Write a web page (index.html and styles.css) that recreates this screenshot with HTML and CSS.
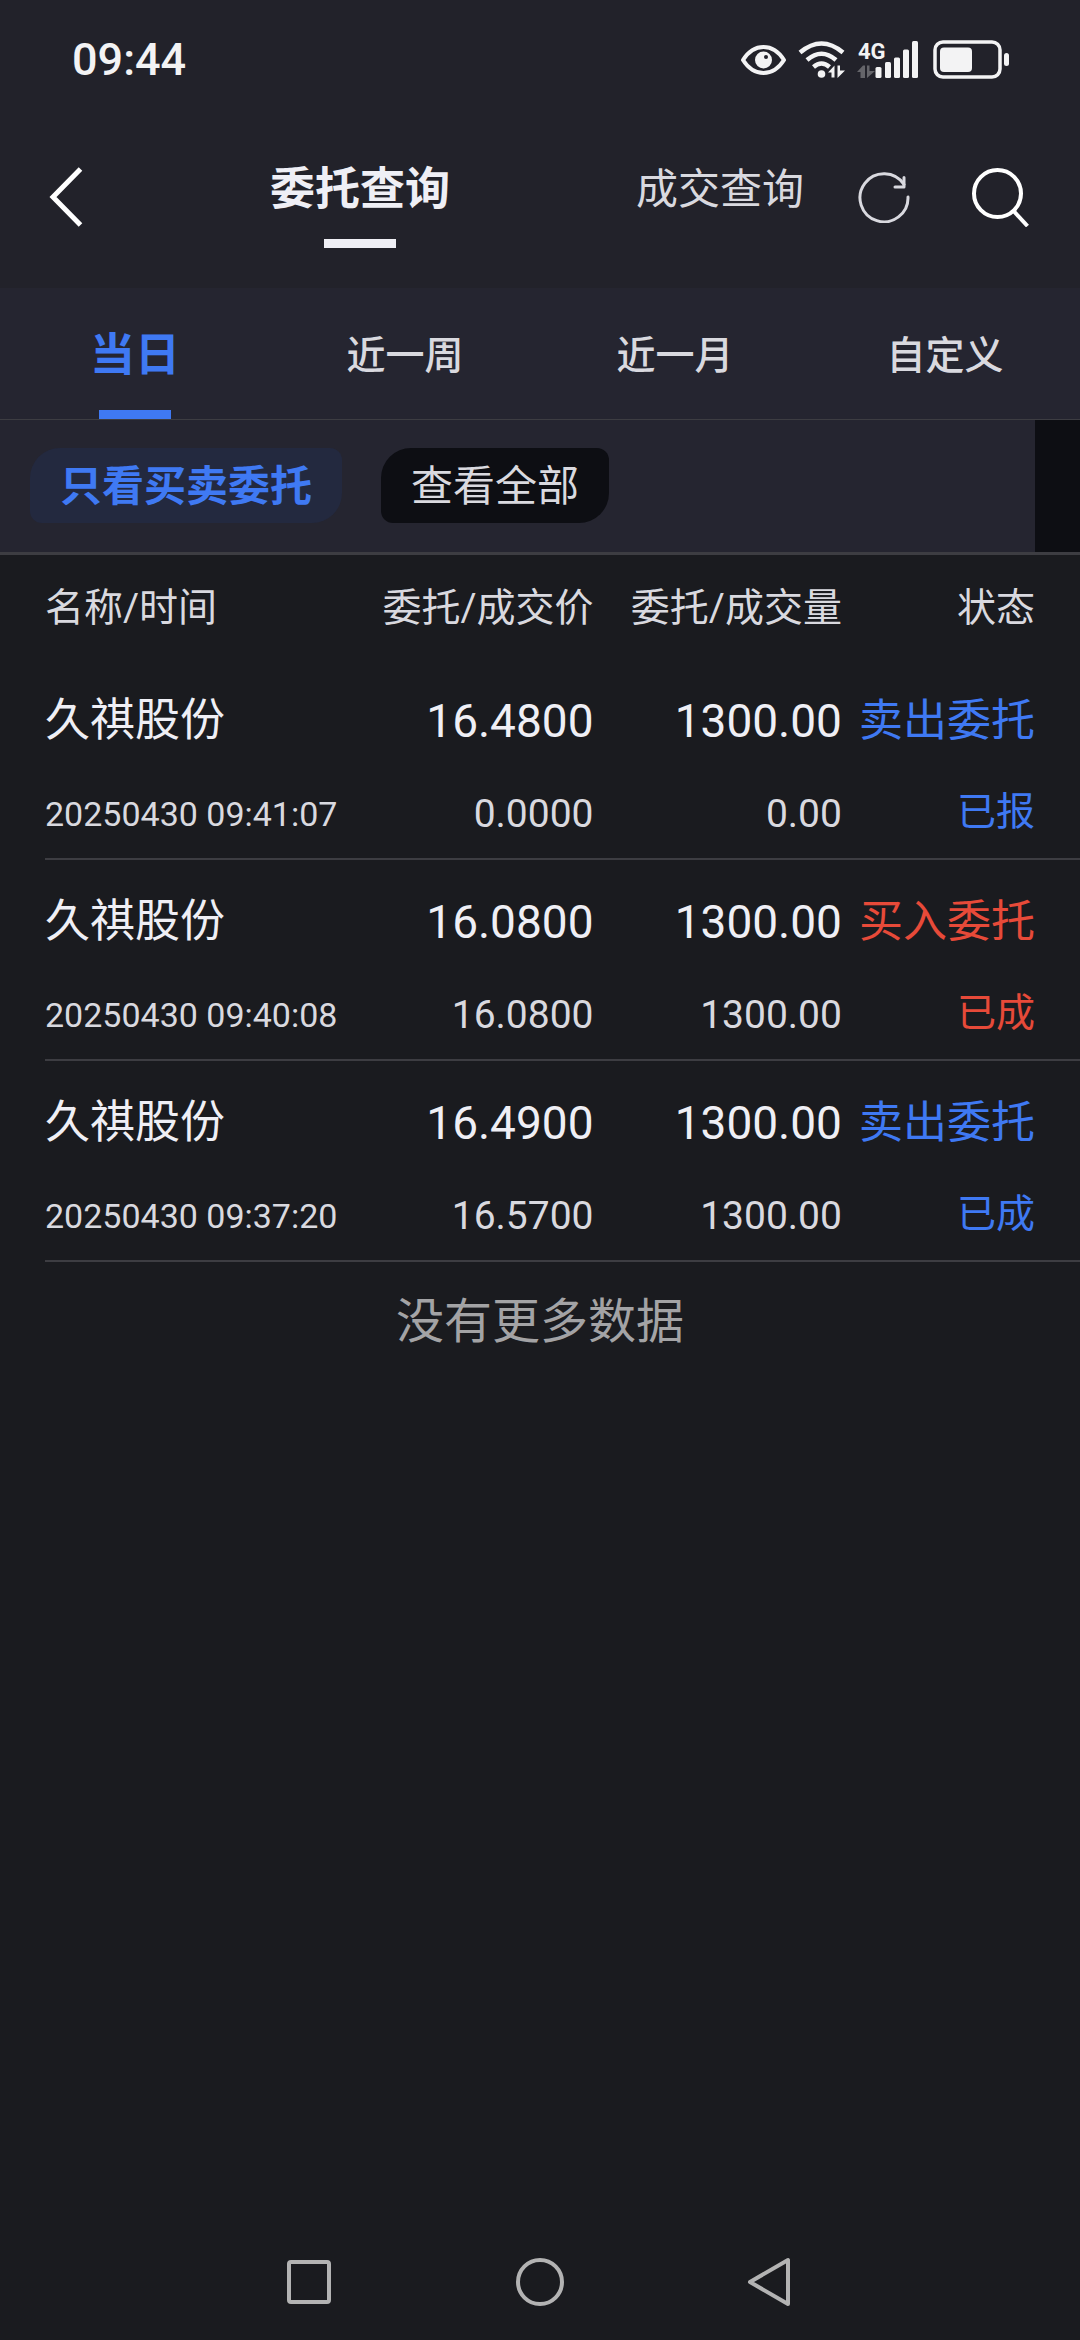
FILE: index.html
```html
<!DOCTYPE html>
<html lang="zh-CN">
<head>
  <meta charset="UTF-8">
  <meta name="viewport" content="width=device-width, initial-scale=1">
  <title>委托查询</title>
  <link rel="stylesheet" href="styles.css">
</head>
<body>
  <div class="status-bar">
    <time class="clock">09:44</time>
    <div class="status-icons">
      <svg width="45" height="40" viewBox="0 0 45 40" aria-hidden="true">
        <path d="M2 20C8 10.500 15 7 22.500 7S37 10.500 43 20C37 29.500 30 33 22.500 33S8 29.500 2 20Z" fill="none" stroke="#f3f3f4" stroke-width="4" stroke-linejoin="round"/>
        <circle cx="22.500" cy="20" r="8.500" fill="#f3f3f4"/>
        <circle cx="25" cy="17" r="2" fill="#22222a"/>
      </svg>
      <svg width="47" height="40" viewBox="0 0 47 40" aria-hidden="true">
        <g fill="none" stroke="#f3f3f4" stroke-width="4.500">
          <path d="M2 12.500Q23.500-5.500 45 12.500"/>
          <path d="M9 20Q23.500 7.500 38 20"/>
          <path d="M15.500 27Q23.500 20 31.500 27"/>
        </g>
        <circle cx="23.500" cy="34" r="3.800" fill="#f3f3f4"/>
        <path d="M30 32.500L36.500 25.500V37.500H33.500V32.500ZM39.500 25.500H42V30.500H47L39.500 38Z" fill="#f3f3f4"/>
      </svg>
      <svg width="64" height="40" viewBox="0 0 64 40" aria-hidden="true">
        <text class="network" x="1" y="19">4G</text>
        <path d="M0 32L6 25.500V38H3.500V32ZM10 25.500H12.500V31H18L10 38ZM6 25.500H8V38H6Z" fill="#65656a"/>
        <g fill="#f3f3f4">
          <rect x="18.500" y="27" width="6" height="11" rx="1.500"/>
          <rect x="28" y="22" width="6" height="16" rx="1.500"/>
          <rect x="37" y="17.500" width="6" height="20.500" rx="1.500"/>
          <rect x="46" y="9.500" width="6" height="28.500" rx="1.500"/>
          <rect x="55" y="1" width="6" height="37" rx="1.500"/>
        </g>
      </svg>
      <svg width="76" height="40" viewBox="0 0 76 40" aria-hidden="true">
        <rect x="2" y="2" width="65" height="35" rx="8" fill="none" stroke="#f3f3f4" stroke-width="3.500"/>
        <rect x="7" y="7.500" width="32" height="24.500" rx="4" fill="#f3f3f4"/>
        <rect x="71" y="13" width="5" height="13" rx="2.500" fill="#f3f3f4"/>
      </svg>
    </div>
  </div>

  <header class="header">
    <button class="icon-btn back" type="button" aria-label="返回">
      <svg width="34" height="60" viewBox="0 0 34 60"><path d="M31.500 2L4 30L31.500 58" fill="none" stroke="#fff" stroke-width="5"/></svg>
    </button>
    <nav class="views">
      <a class="view active" href="#orders">委托查询</a>
      <a class="view" href="#deals">成交查询</a>
    </nav>
    <div class="actions">
      <button class="icon-btn" type="button" aria-label="刷新">
        <svg width="52" height="52" viewBox="0 0 52 52" fill="none" stroke="#d9d9df" stroke-width="3" stroke-linecap="round" stroke-linejoin="round">
          <path d="M50 26A24 24 0 1 1 46 13.500"/>
          <path d="M46 6.500V16H37"/>
        </svg>
      </button>
      <button class="icon-btn" type="button" aria-label="搜索">
        <svg width="57" height="60" viewBox="0 0 57 60" fill="none" stroke="#fff" stroke-width="4">
          <circle cx="25.500" cy="26.500" r="23.500"/>
          <path d="M42 44.500L55.500 59"/>
        </svg>
      </button>
    </div>
  </header>

  <nav class="ranges">
    <a class="range active" href="#today">当日</a>
    <a class="range" href="#week">近一周</a>
    <a class="range" href="#month">近一月</a>
    <a class="range" href="#custom">自定义</a>
  </nav>

  <div class="filters">
    <div class="chips">
      <button class="chip active" type="button">只看买卖委托</button>
      <button class="chip" type="button">查看全部</button>
    </div>
  </div>

  <main class="content">
    <table class="orders" id="orders">
      <thead>
        <tr>
          <th class="col-name">名称/时间</th>
          <th class="col-num">委托/成交价</th>
          <th class="col-num">委托/成交量</th>
          <th class="col-state">状态</th>
        </tr>
      </thead>
      <tbody>
        <tr>
          <td><div class="main name">久祺股份</div><div class="sub date">20250430 09:41:07</div></td>
          <td><div class="main">16.4800</div><div class="sub">0.0000</div></td>
          <td><div class="main">1300.00</div><div class="sub">0.00</div></td>
          <td class="state sell"><div class="main">卖出委托</div><div class="sub">已报</div></td>
        </tr>
        <tr>
          <td><div class="main name">久祺股份</div><div class="sub date">20250430 09:40:08</div></td>
          <td><div class="main">16.0800</div><div class="sub">16.0800</div></td>
          <td><div class="main">1300.00</div><div class="sub">1300.00</div></td>
          <td class="state buy"><div class="main">买入委托</div><div class="sub">已成</div></td>
        </tr>
        <tr>
          <td><div class="main name">久祺股份</div><div class="sub date">20250430 09:37:20</div></td>
          <td><div class="main">16.4900</div><div class="sub">16.5700</div></td>
          <td><div class="main">1300.00</div><div class="sub">1300.00</div></td>
          <td class="state sell"><div class="main">卖出委托</div><div class="sub">已成</div></td>
        </tr>
      </tbody>
    </table>
    <p class="no-more">没有更多数据</p>
  </main>

  <footer class="system-nav">
    <button class="icon-btn" type="button" aria-label="最近任务">
      <svg width="50" height="50" viewBox="0 0 50 50"><rect x="5" y="5" width="40" height="40" rx="2" fill="none" stroke="#b3b3b3" stroke-width="4"/></svg>
    </button>
    <button class="icon-btn" type="button" aria-label="主屏幕">
      <svg width="50" height="50" viewBox="0 0 50 50"><circle cx="25" cy="25" r="22" fill="none" stroke="#b3b3b3" stroke-width="4"/></svg>
    </button>
    <button class="icon-btn" type="button" aria-label="返回上一页">
      <svg width="50" height="50" viewBox="0 0 50 50"><path d="M42 3V47L4 25Z" fill="none" stroke="#b3b3b3" stroke-width="4" stroke-linejoin="round"/></svg>
    </button>
  </footer>
</body>
</html>
```
FILE: styles.css
```css
* {
  box-sizing: border-box;
}

body {
  margin: 0;
  min-height: 100vh;
  display: flex;
  flex-direction: column;
  background: #1a1b1f;
  color: #d9d9df;
  font-family: Roboto, "Noto Sans CJK SC", sans-serif;
}

a {
  color: inherit;
  text-decoration: none;
}

button {
  margin: 0;
  padding: 0;
  border: 0;
  background: none;
  color: inherit;
  font: inherit;
}

svg {
  display: block;
}

/* system status bar */
.status-bar {
  display: flex;
  align-items: center;
  justify-content: space-between;
  padding: 30px 71px 16px 72px;
  background: #22222a;
}

.clock {
  color: #f3f3f4;
  font-size: 45px;
  font-weight: 500;
  line-height: 60px;
}

.status-icons {
  display: flex;
  gap: 12px;
}

.network {
  fill: #f3f3f4;
  font-size: 22px;
  font-weight: 700;
}

/* header */
.header {
  display: grid;
  grid-template-columns: 2fr 5fr 2fr;
  align-items: center;
  background: #22222a;
}

.back {
  justify-self: start;
  padding-left: 49px;
}

.views {
  display: grid;
  grid-template-columns: 1fr 1fr;
  column-gap: 20%;
  padding: 54px 0 40px;
  text-align: center;
}

.view {
  font-size: 42px;
  line-height: 60px;
}

.view.active {
  color: #efeff5;
  font-size: 45px;
  font-weight: 700;
}

.view.active::after {
  content: "";
  display: block;
  width: 72px;
  height: 9px;
  margin: 19px auto 0;
  background: #efeff5;
}

.actions {
  display: flex;
  align-items: center;
  justify-content: flex-end;
  gap: 62px;
  padding-right: 51px;
}

/* date ranges */
.ranges {
  display: grid;
  grid-template-columns: repeat(4, 1fr);
  background: #252530;
  border-bottom: 1px solid #3d3d42;
  text-align: center;
}

.range {
  padding-top: 38px;
  font-size: 39px;
  font-weight: 500;
  line-height: 60px;
}

.range.active {
  color: #3f79f3;
  font-size: 45px;
  font-weight: 700;
}

.range.active::after {
  content: "";
  display: block;
  width: 72px;
  height: 9px;
  margin: 24px auto 0;
  background: #3f79f3;
}

/* filters */
.filters {
  padding-right: 45px;
  background: #0d0e13;
  border-bottom: 3px solid #3d3d42;
}

.chips {
  display: flex;
  gap: 39px;
  padding: 28px 30px 29px;
  background: #252530;
}

.chip {
  padding: 2px 30px 0;
  border-radius: 30px 12px;
  background: #0d0e13;
  font-size: 42px;
  line-height: 73px;
}

.chip.active {
  background: #23293f;
  color: #3f79f3;
  font-weight: 700;
}

/* orders */
.content {
  flex: 1;
}

.orders {
  width: calc(100% - 45px);
  margin-left: 45px;
  table-layout: fixed;
  border-collapse: collapse;
  text-align: right;
}

.orders th {
  padding: 23px 0 21px;
  font-size: 39px;
  font-weight: 400;
  line-height: 60px;
}

.orders td {
  padding: 32px 0 14px;
  border-bottom: 2px solid #3d3d42;
  vertical-align: top;
}

.orders th:first-child,
.orders td:first-child {
  text-align: left;
}

.orders th:last-child,
.orders td:last-child {
  padding-right: 45px;
}

.col-name {
  width: 29%;
}

.col-num {
  width: 24%;
}

.col-state {
  width: 23%;
}

.main {
  color: #efeff5;
  font-size: 46px;
  line-height: 60px;
  white-space: nowrap;
}

.name {
  font-size: 45px;
}

.sub {
  margin-top: 33px;
  font-size: 39px;
  line-height: 60px;
  white-space: nowrap;
}

.date {
  font-size: 34px;
}

.state .main {
  color: inherit;
  font-size: 44px;
}

.state .sub {
  margin-top: 31px;
}

.sell {
  color: #3f79f3;
}

.buy {
  color: #e74a39;
}

.no-more {
  margin: 30px 0;
  color: #a3a3a5;
  font-size: 48px;
  line-height: 60px;
  text-align: center;
}

/* system navigation */
.system-nav {
  display: flex;
  justify-content: center;
  gap: 181px;
  padding: 33px 0;
}
```
